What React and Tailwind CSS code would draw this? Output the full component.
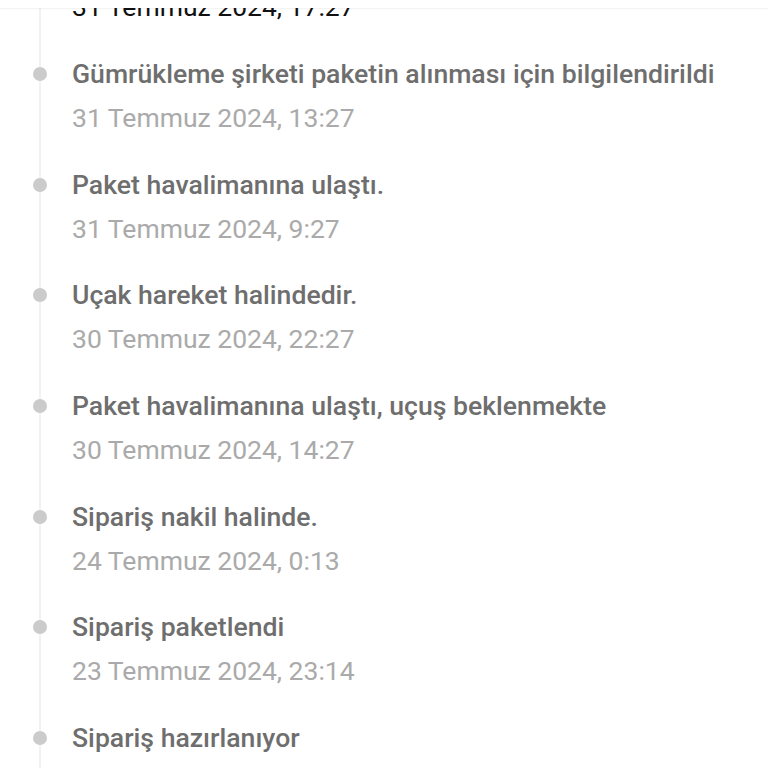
import React from "react";

const items = [
  { t: "Paket teslim edildi", d: "31 Temmuz 2024, 17:27", active: true },
  { t: "Gümrükleme şirketi paketin alınması için bilgilendirildi", d: "31 Temmuz 2024, 13:27" },
  { t: "Paket havalimanına ulaştı.", d: "31 Temmuz 2024, 9:27" },
  { t: "Uçak hareket halindedir.", d: "30 Temmuz 2024, 22:27" },
  { t: "Paket havalimanına ulaştı, uçuş beklenmekte", d: "30 Temmuz 2024, 14:27" },
  { t: "Sipariş nakil halinde.", d: "24 Temmuz 2024, 0:13" },
  { t: "Sipariş paketlendi", d: "23 Temmuz 2024, 23:14" },
  { t: "Sipariş hazırlanıyor", d: "23 Temmuz 2024, 22:10" },
];

export default function App() {
  return (
    <div className="relative w-[768px] h-[768px] overflow-hidden bg-white" style={{ fontFamily: "Roboto, 'Noto Sans', sans-serif" }}>
      <div className="absolute top-0 left-0 right-0 h-[8px] bg-white z-10 shadow-[0_1px_2px_rgba(0,0,0,0.06)]" />
      <div className="relative mt-[-52.67px]">
        <div className="absolute left-[39px] top-0 bottom-0 w-[2px] bg-[#f1f1f1]" />
        <ul className="relative">
          {items.map((it, i) => (
            <li key={i} className="flex h-[110.67px]">
              <div className="w-[72px] shrink-0 h-[32px] flex items-center pl-[33px]">
                <div className={"w-[14px] h-[14px] rounded-full " + (it.active ? "bg-[#222]" : "bg-[#cbcbcb]")} />
              </div>
              <div className="flex flex-col">
                <div className={"text-[26.6px] leading-[32px] font-medium whitespace-nowrap " + (it.active ? "text-[#111]" : "text-[#6e6e6e]")}>{it.t}</div>
                <div className={"mt-[12px] text-[26.5px] leading-[32px] whitespace-nowrap " + (it.active ? "text-[#111]" : "text-[#aaaaaa]")}>{it.d}</div>
              </div>
            </li>
          ))}
        </ul>
      </div>
    </div>
  );
}
